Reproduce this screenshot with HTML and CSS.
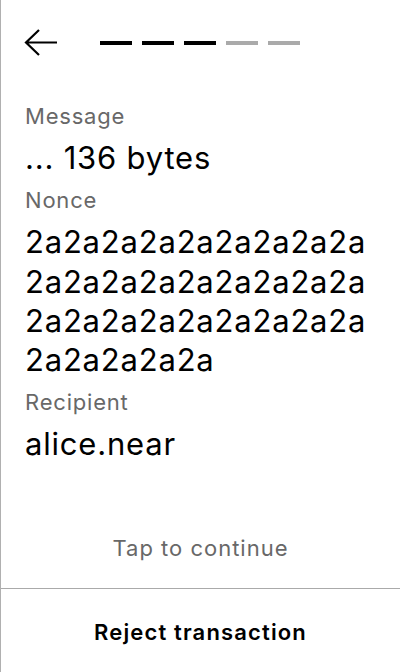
FILE: index.html
```html
<!DOCTYPE html>
<html>
<head>
<meta charset="utf-8">
<link rel="stylesheet" href="styles.css">
</head>
<body>
<div class="screen">
  <header class="top">
    <svg class="back" width="34" height="30" viewBox="0 0 34 30">
      <path d="M2 14.5 H33 M15 2 L2 14.5 L15 27" fill="none" stroke="#000" stroke-width="2.2"/>
    </svg>
    <div class="steps">
      <span class="step done"></span>
      <span class="step done"></span>
      <span class="step done"></span>
      <span class="step"></span>
      <span class="step"></span>
    </div>
  </header>
  <main class="fields">
    <div class="field">
      <div class="label">Message</div>
      <div class="value">... 136 bytes</div>
    </div>
    <div class="field">
      <div class="label">Nonce</div>
      <div class="value">2a2a2a2a2a2a2a2a2a<br>2a2a2a2a2a2a2a2a2a<br>2a2a2a2a2a2a2a2a2a<br>2a2a2a2a2a</div>
    </div>
    <div class="field">
      <div class="label">Recipient</div>
      <div class="value">alice.near</div>
    </div>
  </main>
  <div class="tap">Tap to continue</div>
  <div class="reject">Reject transaction</div>
</div>
</body>
</html>
```
FILE: styles.css
```css
html, body {
  margin: 0;
  padding: 0;
  background: #fff;
}
body {
  font-family: Inter, "Noto Sans", sans-serif;
  color: #000;
}
.screen {
  width: 400px;
  height: 672px;
  box-sizing: border-box;
  border-left: 1px solid #b0b0b0;
  display: flex;
  flex-direction: column;
}
.top {
  height: 86px;
  flex-shrink: 0;
  display: flex;
  align-items: center;
  padding-left: 23px;
  gap: 42px;
}
.back {
  display: block;
}
.steps {
  display: flex;
  gap: 10px;
}
.step {
  display: block;
  width: 32px;
  height: 4px;
  background: #aaaaaa;
}
.step.done {
  background: #000;
}
.fields {
  padding: 17px 24px 0;
  display: flex;
  flex-direction: column;
  gap: 10px;
}
.label {
  font-size: 22px;
  line-height: 26px;
  letter-spacing: 0.8px;
  color: #686868;
}
.value {
  font-size: 31px;
  line-height: 39.3px;
  letter-spacing: 0.8px;
  margin-top: 9px;
}
.tap {
  margin-top: auto;
  text-align: center;
  font-size: 22px;
  line-height: 26px;
  letter-spacing: 1px;
  color: #686868;
  padding-bottom: 27px;
  border-bottom: 1px solid #aaa;
}
.reject {
  height: 83px;
  padding-top: 3px;
  box-sizing: border-box;
  display: flex;
  align-items: center;
  justify-content: center;
  font-size: 22px;
  font-weight: 600;
  letter-spacing: 1.15px;
}
```
